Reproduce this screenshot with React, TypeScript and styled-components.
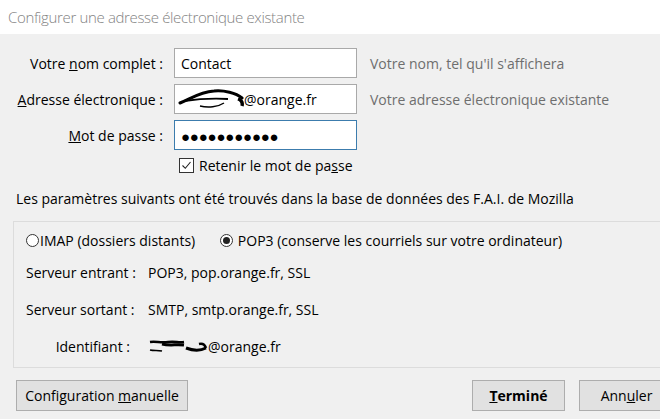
import React from "react";
import styled, { createGlobalStyle } from "styled-components";

const FONT = `"Open Sans", "Noto Sans", Arial, sans-serif`;

const Global = createGlobalStyle`
  html, body { margin: 0; padding: 0; }
  body {
    width: 660px; height: 419px; overflow: hidden;
    background: #f0f0f0;
    font-family: ${FONT};
    color: #000;
  }
`;

const Page = styled.div`
  width: 660px;
  height: 419px;
  display: flex;
  flex-direction: column;
  background: #f0f0f0;
  font-size: 14px;
  letter-spacing: 0;
  overflow: hidden;
`;

const Header = styled.div`
  height: 34px;
  background: #fff;
  display: flex;
  align-items: center;
  padding: 0 0 1px 8px;
  box-sizing: border-box;
  color: #838383;
  font-size: 15px;
  font-weight: 300;
  letter-spacing: -0.35px;
`;

const FormGrid = styled.div`
  display: grid;
  grid-template-columns: 165px 192px auto;
  grid-auto-rows: 30px;
  row-gap: 6px;
  margin-top: 14px;
  align-items: center;
`;

const Label = styled.label`
  text-align: right;
  padding-right: 2px;
  white-space: nowrap;
`;

const Input = styled.div<{ $focus?: boolean }>`
  margin-left: 9px;
  height: 30px;
  box-sizing: border-box;
  background: #fff;
  border: 1px solid ${(p) => (p.$focus ? "#3c7cad" : "#a9a9a9")};
  display: flex;
  align-items: center;
  padding-left: 6px;
  white-space: nowrap;
`;

const Hint = styled.span`
  padding-left: 13px;
  color: #6e6e6e;
  white-space: nowrap;
`;

const Dots = styled.span`
  font-size: 15px;
  letter-spacing: -0.2px;
  padding-top: 1px;
`;

const CheckRow = styled.div`
  display: flex;
  align-items: center;
  gap: 5px;
  margin: 7px 0 0 179px;
  height: 16px;
`;

const Box = styled.span`
  width: 15px;
  height: 15px;
  box-sizing: border-box;
  border: 1px solid #333;
  background: #fff;
  display: inline-flex;
  align-items: center;
  justify-content: center;
`;

const Info = styled.div`
  margin: 16px 0 0 16px;
  height: 20px;
  line-height: 20px;
  white-space: nowrap;
`;

const Group = styled.div`
  margin: 12px -30px 0 13px;
  height: 147px;
  box-sizing: border-box;
  border: 1px solid #dcdcdc;
  padding: 8px 0 0 12px;
`;

const RadioRow = styled.div`
  display: flex;
  align-items: center;
  gap: 25px;
  height: 20px;
`;

const RadioOpt = styled.span`
  display: inline-flex;
  align-items: center;
  gap: 1px;
  white-space: nowrap;
`;

const Circle = styled.span<{ $on?: boolean }>`
  width: 13px;
  height: 13px;
  box-sizing: border-box;
  border-radius: 50%;
  border: 1px solid #333;
  background: #fff;
  display: inline-flex;
  align-items: center;
  justify-content: center;
  &::after {
    content: "";
    display: ${(p) => (p.$on ? "block" : "none")};
    width: 7px;
    height: 7px;
    border-radius: 50%;
    background: #222;
  }
`;

const ServerGrid = styled.div`
  display: grid;
  grid-template-columns: 104px auto;
  grid-template-rows: 20px 20px 20px;
  row-gap: 17px;
  margin-top: 12px;
  align-items: center;
`;

const SLabel = styled.span`
  text-align: right;
  white-space: nowrap;
`;

const SValue = styled.span`
  padding-left: 18px;
  white-space: nowrap;
  display: inline-flex;
  align-items: center;
`;

const Footer = styled.div`
  display: flex;
  align-items: center;
  margin: 12px -14px 0 0;
  padding-left: 16px;
`;

const Button = styled.div<{ $w: number; $bold?: boolean }>`
  width: ${(p) => p.$w}px;
  height: 31px;
  box-sizing: border-box;
  border: 1px solid #adadad;
  background: #e1e1e1;
  display: flex;
  align-items: center;
  justify-content: center;
  font-size: 14px;
  font-weight: ${(p) => (p.$bold ? 700 : 400)};
  white-space: nowrap;
  flex-shrink: 0;
`;

const Spacer = styled.div`
  flex: 1;
`;

const ButtonGap = styled.div`
  width: 14px;
  flex-shrink: 0;
`;

const Scribble = ({ w, h, variant }: { w: number; h: number; variant: "a" | "b" }) =>
  variant === "a" ? (
    <svg width={w} height={h} viewBox="0 0 66 26" style={{ display: "block", marginLeft: -3 }}>
      <path d="M2 17 C14 12 22 6 36 5 C46 4 58 7 64 12" stroke="#000" strokeWidth="3" fill="none" strokeLinecap="round" />
      <path d="M6 15 C20 13 34 12 50 13" stroke="#000" strokeWidth="1.8" fill="none" />
      <path d="M22 20 C30 22 40 21 46 17" stroke="#000" strokeWidth="1.4" fill="none" />
      <path d="M60 13 C63 14 65 16 64 20" stroke="#000" strokeWidth="3.4" fill="none" />
    </svg>
  ) : (
    <svg width={w} height={h} viewBox="0 0 60 14" style={{ display: "block" }}>
      <path d="M2 3 C8 2 12 4 20 3 C28 2 30 4 36 3" stroke="#000" strokeWidth="2.4" fill="none" />
      <path d="M14 5 C22 7 28 5 36 6" stroke="#000" strokeWidth="3" fill="none" />
      <path d="M2 11 C6 12 10 11 14 12" stroke="#000" strokeWidth="1.6" fill="none" />
      <path d="M38 9 C46 12 52 12 58 9" stroke="#000" strokeWidth="3" fill="none" />
      <path d="M51 5 C55 4 57 6 58 9" stroke="#000" strokeWidth="2.6" fill="none" />
    </svg>
  );

export default function App() {
  return (
    <>
      <Global />
      <Page>
        <Header>Configurer une adresse électronique existante</Header>
        <FormGrid>
          <Label>
            Votre <u>n</u>om complet :
          </Label>
          <Input>Contact</Input>
          <Hint>Votre nom, tel qu'il s'affichera</Hint>

          <Label>
            <u>A</u>dresse électronique :
          </Label>
          <Input>
            <Scribble w={66} h={26} variant="a" />
            @orange.fr
          </Input>
          <Hint>Votre adresse électronique existante</Hint>

          <Label>
            <u>M</u>ot de passe :
          </Label>
          <Input $focus>
            <Dots>●●●●●●●●●●●</Dots>
          </Input>
          <span />
        </FormGrid>
        <CheckRow>
          <Box>
            <svg width="11" height="11" viewBox="0 0 11 11">
              <path d="M1.5 5.5 L4.3 8.3 L9.5 2" stroke="#222" strokeWidth="1.1" fill="none" />
            </svg>
          </Box>
          <span>
            Retenir le mot de pa<u>s</u>se
          </span>
        </CheckRow>
        <Info>Les paramètres suivants ont été trouvés dans la base de données des F.A.I. de Mozilla</Info>
        <Group>
          <RadioRow>
            <RadioOpt>
              <Circle />
              <span>IMAP (dossiers distants)</span>
            </RadioOpt>
            <RadioOpt>
              <Circle $on />
              <span>&nbsp;POP3 (conserve les courriels sur votre ordinateur)</span>
            </RadioOpt>
          </RadioRow>
          <ServerGrid>
            <SLabel>Serveur entrant :</SLabel>
            <SValue>POP3, pop.orange.fr, SSL</SValue>
            <SLabel>Serveur sortant :</SLabel>
            <SValue>SMTP, smtp.orange.fr, SSL</SValue>
            <SLabel>Identifiant :</SLabel>
            <SValue>
              <Scribble w={60} h={14} variant="b" />
              @orange.fr
            </SValue>
          </ServerGrid>
        </Group>
        <Footer>
          <Button $w={172}>
            <span>
              Configuration <u>m</u>anuelle
            </span>
          </Button>
          <Spacer />
          <Button $w={93} $bold>
            <span>
              <u>T</u>erminé
            </span>
          </Button>
          <ButtonGap />
          <Button $w={95}>
            <span>
              Ann<u>u</u>ler
            </span>
          </Button>
        </Footer>
      </Page>
    </>
  );
}
